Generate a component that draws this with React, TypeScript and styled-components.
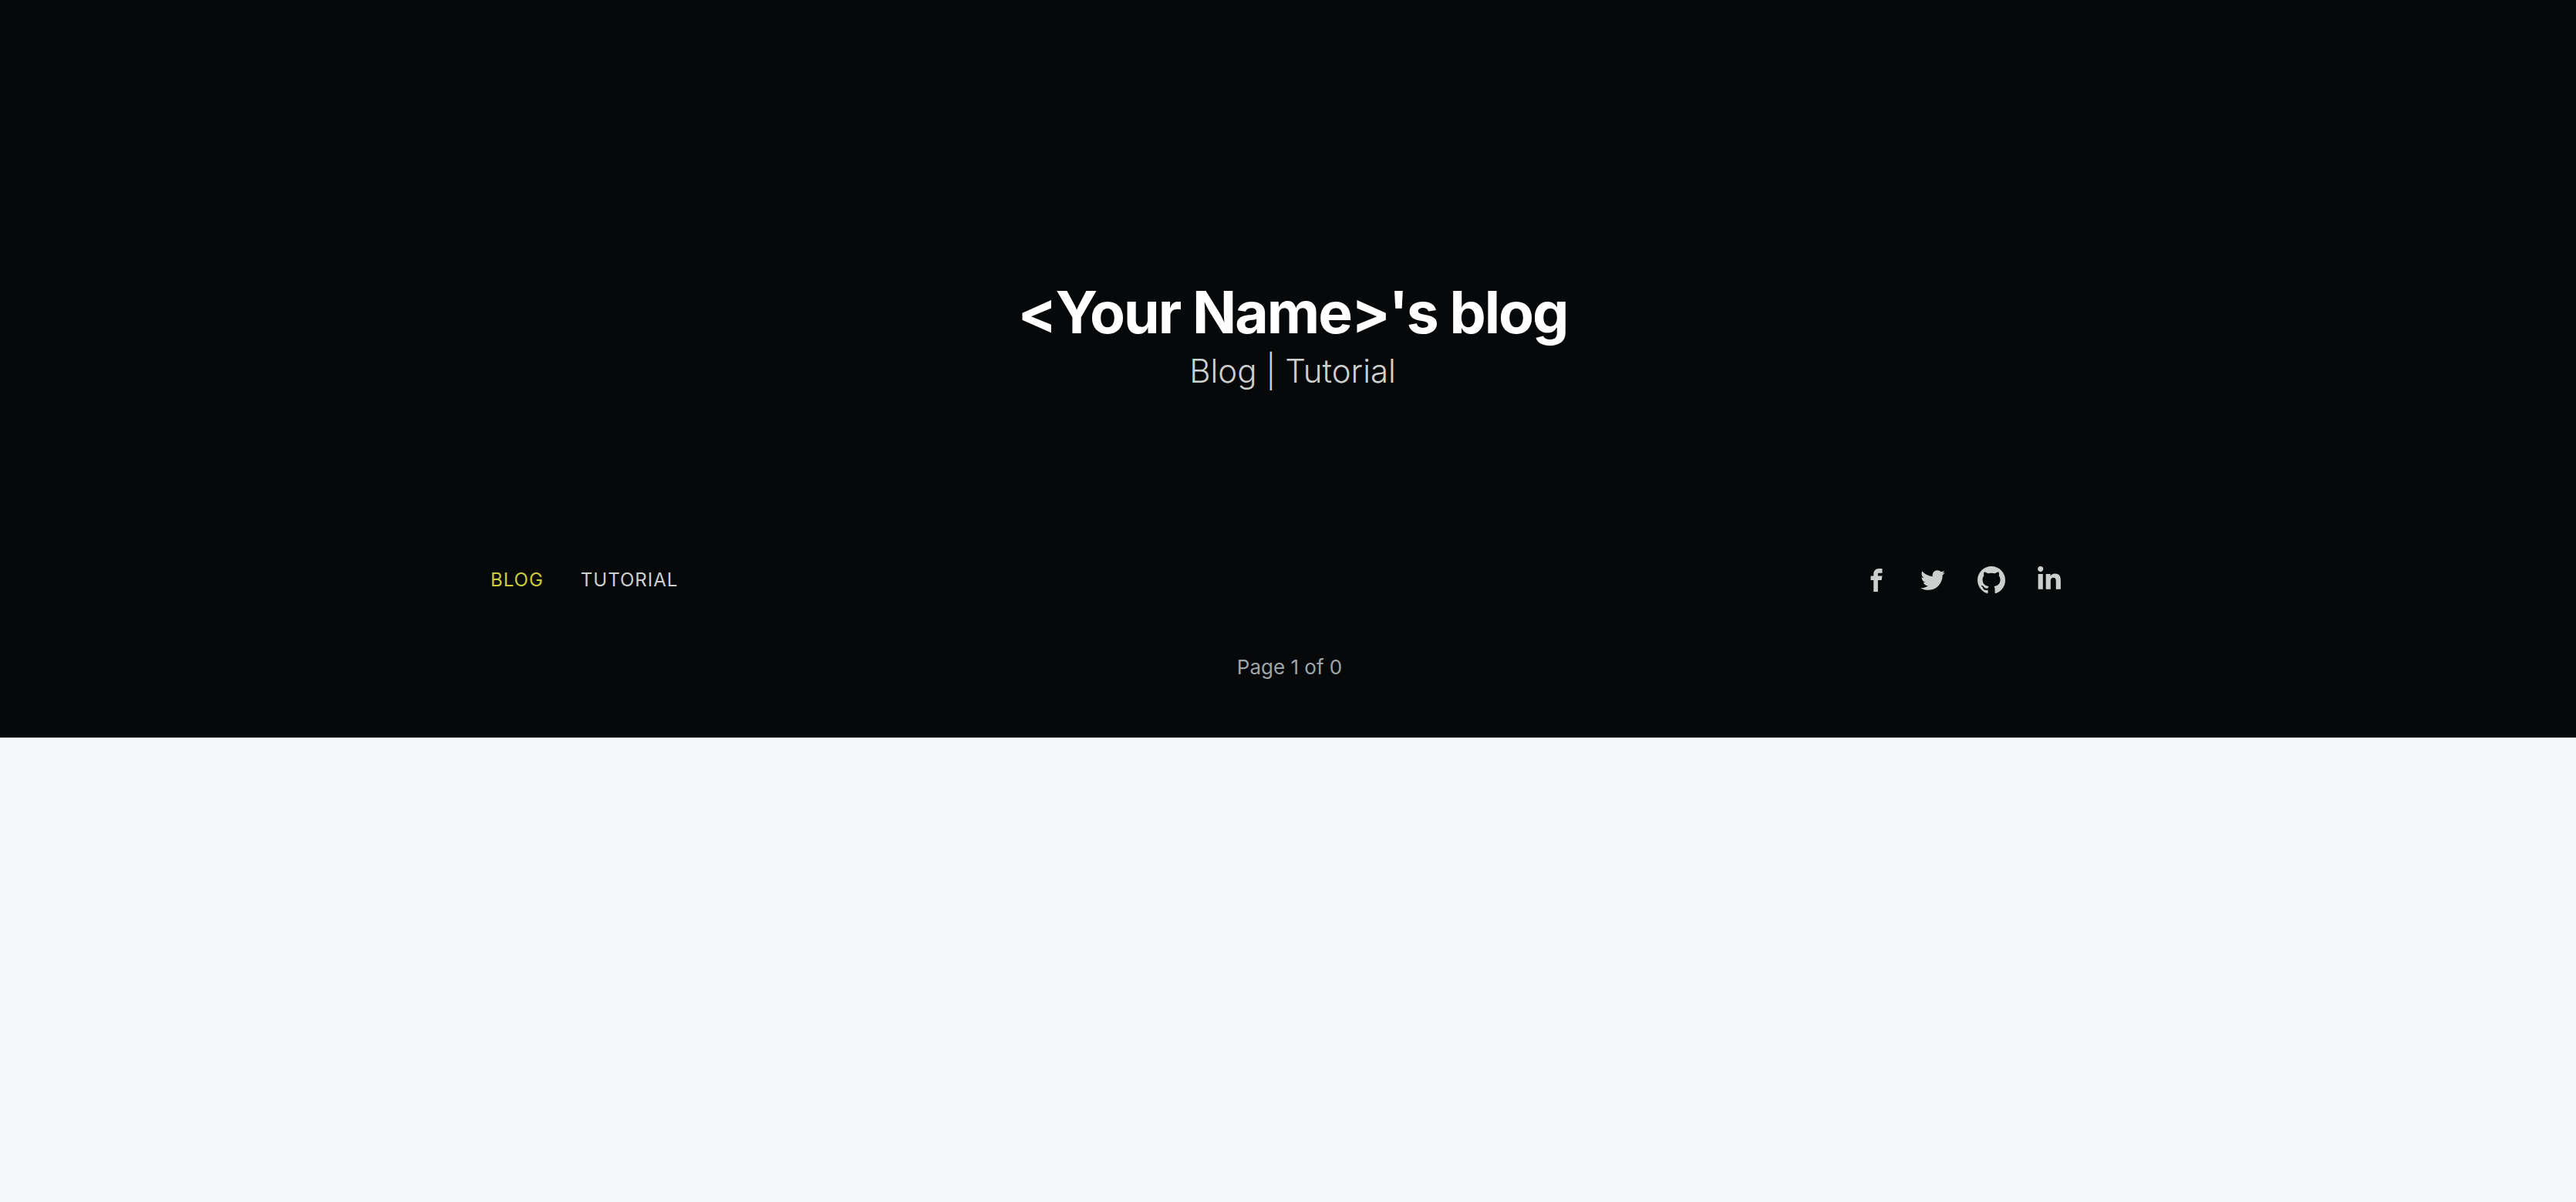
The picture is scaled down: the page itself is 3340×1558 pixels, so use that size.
import React from "react";
import styled, { createGlobalStyle } from "styled-components";
import { FaLinkedinIn } from "react-icons/fa";

const GlobalStyle = createGlobalStyle`
  *, *::before, *::after { box-sizing: border-box; }
  body {
    margin: 0;
    background: #f4f8fb;
    font-family: Inter, "Liberation Sans", sans-serif;
    -webkit-font-smoothing: antialiased;
  }
`;

const Header = styled.header`
  padding: 0 120px;
  background: #06080a;
  color: #fff;
`;

const Inner = styled.div`
  width: 100%;
  max-width: 2080px;
  margin: 0 auto;
`;

const Hero = styled.div`
  display: flex;
  flex-direction: column;
  align-items: center;
  padding: 362px 0 198px;
  text-align: center;
`;

const Title = styled.h1`
  margin: 0;
  padding-left: 12px;
  font-size: 75px;
  line-height: 86px;
  font-weight: 700;
  letter-spacing: -2px;
`;

const Description = styled.h2`
  margin: 0;
  padding-left: 12px;
  font-size: 42px;
  line-height: 66px;
  font-weight: 300;
  color: #cdcfce;
`;

const Bar = styled.nav`
  display: flex;
  justify-content: space-between;
  align-items: center;
  height: 80px;
`;

const Links = styled.ul`
  display: flex;
  gap: 48px;
  margin: 0;
  padding: 0 0 0 6px;
  list-style: none;
`;

const NavLink = styled.a<{ $current?: boolean }>`
  font-size: 24px;
  line-height: 32px;
  letter-spacing: 1px;
  text-transform: uppercase;
  text-decoration: none;
  color: ${(p) => (p.$current ? "#cbcb41" : "#cdcfce")};
`;

const Social = styled.div`
  display: flex;
  align-items: center;
  padding-right: 36px;
  gap: 40px;
`;

const SocialLink = styled.a<{ $size: number; $raised?: boolean }>`
  display: flex;
  padding-bottom: ${(p) => (p.$raised ? "2px" : "0")};
  color: #cdcfce;

  svg {
    display: block;
    width: ${(p) => p.$size}px;
    height: ${(p) => p.$size}px;
    fill: currentColor;
  }
`;

const Pagination = styled.p`
  margin: 0;
  padding: 52px 0 70px 4px;
  font-size: 26px;
  line-height: 42px;
  text-align: center;
  color: #9ba5ab;
`;

export default function App() {
  return (
    <>
      <GlobalStyle />
      <Header>
        <Inner>
          <Hero>
            <Title>&lt;Your Name&gt;'s blog</Title>
            <Description>Blog | Tutorial</Description>
          </Hero>
          <Bar aria-label="Main">
            <Links>
              <li><NavLink href="#blog" $current aria-current="page">Blog</NavLink></li>
              <li><NavLink href="#tutorial">Tutorial</NavLink></li>
            </Links>
            <Social>
              <SocialLink href="#facebook" aria-label="Facebook" $size={30}>
                <svg viewBox="0 0 32 32"><path d="M19 6h5V0h-5c-3.86 0-7 3.14-7 7v3H8v6h4v16h6V16h5l1-6h-6V7c0-.542.458-1 1-1z" /></svg>
              </SocialLink>
              <SocialLink href="#twitter" aria-label="Twitter" $size={36}>
                <svg viewBox="0 0 32 32"><path d="M30.063 7.313c-.813 1.125-1.75 2.125-2.875 2.938v.75c0 1.563-.188 3.125-.688 4.625a15.088 15.088 0 0 1-2.063 4.438c-.875 1.438-2 2.688-3.25 3.813a15.015 15.015 0 0 1-4.625 2.563c-1.813.688-3.75 1-5.75 1-3.25 0-6.188-.875-8.875-2.625.438.063.875.125 1.375.125 2.688 0 5.063-.875 7.188-2.5-1.25 0-2.375-.375-3.375-1.125s-1.688-1.688-2.063-2.875c.438.063.813.125 1.125.125.5 0 1-.063 1.5-.25-1.313-.25-2.438-.938-3.313-1.938a5.673 5.673 0 0 1-1.313-3.688v-.063c.813.438 1.688.688 2.625.688a5.228 5.228 0 0 1-1.875-2c-.5-.875-.688-1.813-.688-2.75 0-1.063.25-2.063.75-2.938 1.438 1.75 3.188 3.188 5.25 4.25s4.313 1.688 6.688 1.813a5.579 5.579 0 0 1 1.5-5.438c1.125-1.125 2.5-1.688 4.125-1.688s3.063.625 4.188 1.813a11.48 11.48 0 0 0 3.688-1.375c-.438 1.375-1.313 2.438-2.563 3.188 1.125-.125 2.188-.438 3.313-.875z" /></svg>
              </SocialLink>
              <SocialLink href="#github" aria-label="GitHub" $size={36}>
                <svg viewBox="0 0 16 16"><path d="M8 0C3.58 0 0 3.58 0 8c0 3.54 2.29 6.53 5.47 7.59.4.07.55-.17.55-.38 0-.19-.01-.82-.01-1.49-2.01.37-2.53-.49-2.69-.94-.09-.23-.48-.94-.82-1.13-.28-.15-.68-.52-.01-.53.63-.01 1.08.58 1.23.82.72 1.21 1.87.87 2.33.66.07-.52.28-.87.51-1.07-1.78-.2-3.64-.89-3.64-3.95 0-.87.31-1.59.82-2.15-.08-.2-.36-1.02.08-2.12 0 0 .67-.21 2.2.82.64-.18 1.32-.27 2-.27s1.36.09 2 .27c1.53-1.04 2.2-.82 2.2-.82.44 1.1.16 1.92.08 2.12.51.56.82 1.27.82 2.15 0 3.07-1.87 3.75-3.65 3.95.29.25.54.73.54 1.48 0 1.07-.01 1.93-.01 2.2 0 .21.15.46.55.38A8.01 8.01 0 0 0 16 8c0-4.42-3.58-8-8-8z" /></svg>
              </SocialLink>
              <SocialLink href="#linkedin" aria-label="LinkedIn" $size={34} $raised>
                <FaLinkedinIn />
              </SocialLink>
            </Social>
          </Bar>
          <Pagination>Page 1 of 0</Pagination>
        </Inner>
      </Header>
    </>
  );
}
